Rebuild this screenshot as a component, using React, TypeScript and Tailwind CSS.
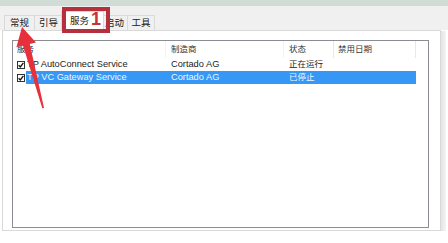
import React from "react";

const font = { fontFamily: '"Liberation Sans", "Noto Sans CJK SC", sans-serif' };

const tabs = [
  { label: "常规", w: "w-[31px]" },
  { label: "引导", w: "w-[29px]" },
  { label: "服务", w: "w-[43px]", active: true },
  { label: "启动", w: "w-[27px]" },
  { label: "工具", w: "w-[28px]" },
];

const services = [
  { name: "TP AutoConnect Service", vendor: "Cortado AG", status: "正在运行" },
  { name: "TP VC Gateway Service", vendor: "Cortado AG", status: "已停止", selected: true },
];

function Check() {
  return (
    <div className="w-[8px] h-[8px] border border-[#333] bg-white flex items-center justify-center">
      <svg width="6" height="6" viewBox="0 0 6 6">
        <path d="M0.6 3.2 L2.3 4.9 L5.4 0.9" fill="none" stroke="#111" strokeWidth="1.3" />
      </svg>
    </div>
  );
}

export default function App() {
  return (
    <div className="relative w-[448px] h-[243px] bg-white overflow-hidden text-[#222]" style={font}>
      {/* window strip */}
      <div className="h-[6px] bg-[#d0dcd5]" />

      {/* tabs */}
      <div className="relative z-10 h-[24px] bg-[#f0f0f0] flex items-end pl-[4px]">
        {tabs.map((t) =>
          t.active ? (
            <div
              key={t.label}
              className={`${t.w} -ml-[2px] -mr-[2px] h-[20px] -mb-px bg-white border border-b-0 border-[#d9d9d9] flex items-center justify-center text-[9.5px] pr-[6px] relative z-10`}
            >
              {t.label}
            </div>
          ) : (
            <div
              key={t.label}
              className={`${t.w} h-[15px] bg-[#f0f0f0] border border-b-0 border-[#d9d9d9] -ml-px first:ml-0 flex items-center justify-center text-[9.5px]`}
            >
              {t.label}
            </div>
          )
        )}
      </div>

      {/* panel */}
      <div className="flex">
        <div className="ml-[2px] w-[439px] h-[201px] border border-[#d9d9d9] bg-white pt-[9px] pl-[9px]">
          <div className="w-[417px] h-[188px] border border-[#8a8e94] bg-white">
            {/* header */}
            <div className="flex h-[17px] items-center text-[8.5px] text-[#333]">
              <div className="w-[153px] h-full pl-[4px] flex items-center border-r border-[#f3f3f3]">服务</div>
              <div className="w-[118px] h-full pl-[5px] flex items-center border-r border-[#f3f3f3]">制造商</div>
              <div className="w-[50px] h-full pl-[5px] flex items-center border-r border-[#e8e8e8]">状态</div>
              <div className="w-[82px] h-full pl-[4px] flex items-center border-r border-[#e8e8e8]">禁用日期</div>
              <div className="flex-1" />
            </div>
            {/* rows */}
            {services.map((s) => (
              <div key={s.name} className="flex h-[13px] items-center">
                <div className="w-[13px] pl-[4px] flex items-center">
                  <Check />
                </div>
                <div
                  className={`flex h-full items-center w-[390px] text-[9.25px] ${
                    s.selected ? "bg-[#3797f5] text-[#eef6ff]" : "text-[#222]"
                  }`}
                >
                  <div className="w-[140px] pl-[1px] whitespace-nowrap">{s.name}</div>
                  <div className="w-[118px] pl-[5px] whitespace-nowrap">{s.vendor}</div>
                  <div className="w-[50px] pl-[5px] whitespace-nowrap text-[8.5px]">{s.status}</div>
                </div>
              </div>
            ))}
          </div>
        </div>
        <div className="mt-[1px] w-[5px] h-[200px] bg-gradient-to-r from-[#e4e4e4] to-[#f4f4f4]" />
      </div>

      {/* annotation: red box and number */}
      <div className="absolute left-[62px] top-[7px] w-[48px] h-[26px] border-[4px] border-[#b5303c] z-20" />
      <div className="absolute left-[91px] top-[10px] text-[18px] font-bold leading-none text-[#cc3038] z-20">
        1
      </div>

      {/* annotation: arrow */}
      <svg className="absolute left-0 top-0 z-30 pointer-events-none" width="448" height="243" viewBox="0 0 448 243">
        <polygon
          points="22,27 36,42.5 29.8,44 44,108 42.3,108.3 23,45.5 16.4,47.2"
          fill="#e8303a"
        />
      </svg>
    </div>
  );
}
